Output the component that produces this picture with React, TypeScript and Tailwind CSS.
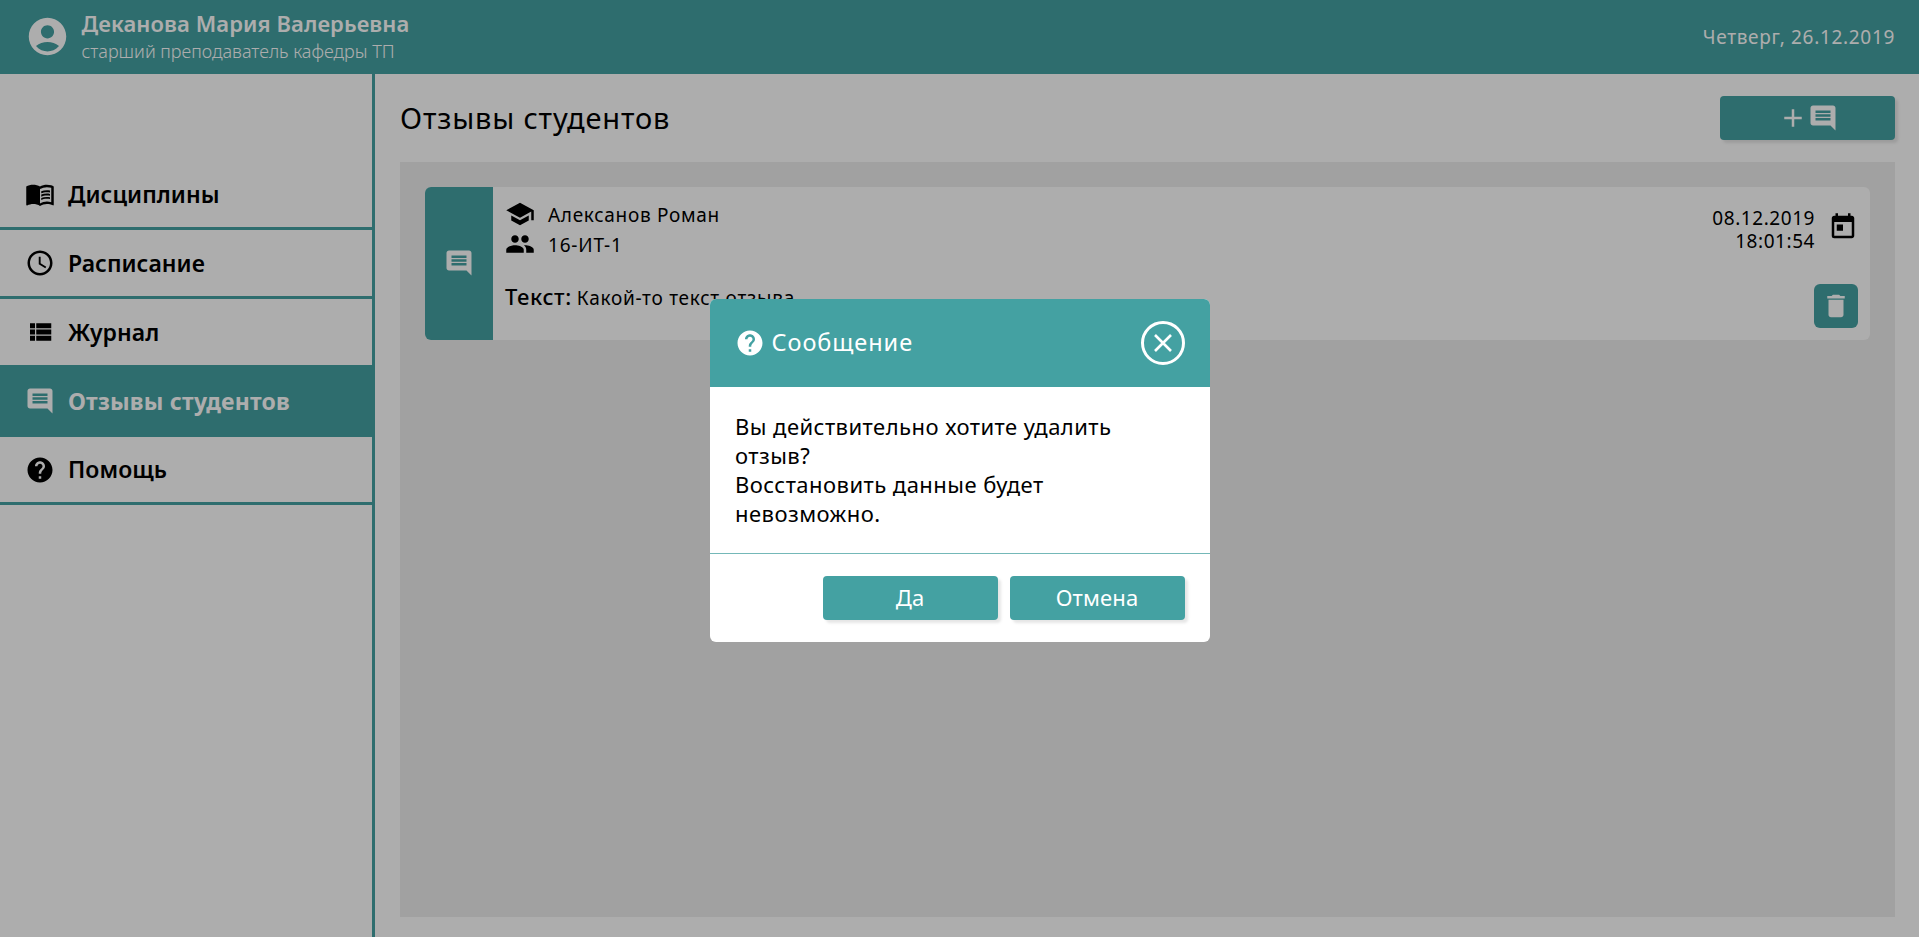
import type { ReactNode } from "react";
import {
  MdAccessTime,
  MdAccountCircle,
  MdAdd,
  MdComment,
  MdDelete,
  MdHelp,
  MdMenuBook,
  MdPeople,
  MdSchool,
  MdToday,
} from "react-icons/md";

function ListIcon() {
  return (
    <svg width="30" height="30" viewBox="0 0 24 24" fill="currentColor">
      <path d="M4 14h4v-4H4v4zm0 5h4v-4H4v4zM4 9h4V5H4v4zm5 5h12v-4H9v4zm0 5h12v-4H9v4zM9 5v4h12V5H9z" />
    </svg>
  );
}

function NavItem({ icon, label, active = false }: { icon: ReactNode; label: string; active?: boolean }) {
  return (
    <a
      className={
        active
          ? "flex h-[69px] items-center gap-[13px] border-b-3 border-[#44a1a2] bg-[#44a1a2] pl-[25px] text-[23px] font-bold tracking-[0.22px] text-white"
          : "flex h-[69px] items-center gap-[13px] border-b-3 border-[#44a1a2] pl-[25px] text-[23px] font-semibold tracking-[0.05px] last:h-[68px]"
      }
    >
      {icon}
      <span>{label}</span>
    </a>
  );
}

function Header() {
  return (
    <header className="flex h-[74px] shrink-0 items-center justify-between bg-[#44a1a2] pr-6 pl-[24.5px] text-white">
      <div className="flex items-center gap-3">
        <MdAccountCircle size={45} className="-mt-[2px]" />
        <div>
          <div className="text-[22px] leading-[27px] font-semibold tracking-[0.1px]">Деканова Мария Валерьевна</div>
          <div className="pt-px text-[18px] leading-[26px] font-light">старший преподаватель кафедры ТП</div>
        </div>
      </div>
      <div className="text-[19px] tracking-[0.68px]">Четверг, 26.12.2019</div>
    </header>
  );
}

function Sidebar() {
  return (
    <nav className="w-[375px] shrink-0 border-r-3 border-[#44a1a2] pt-[87px]">
      <NavItem icon={<MdMenuBook size={30} />} label="Дисциплины" />
      <NavItem icon={<MdAccessTime size={30} />} label="Расписание" />
      <NavItem icon={<ListIcon />} label="Журнал" />
      <NavItem icon={<MdComment size={30} />} label="Отзывы студентов" active />
      <NavItem icon={<MdHelp size={30} />} label="Помощь" />
    </nav>
  );
}

function ReviewCard() {
  return (
    <article className="flex h-[153px] overflow-hidden rounded-md bg-white">
      <div className="flex w-[68px] shrink-0 items-center justify-center bg-[#44a1a2] text-white">
        <MdComment size={30} className="-mt-px" />
      </div>
      <div className="flex flex-1 justify-between p-3">
        <div className="text-[19px]">
          <div className="flex h-[30px] items-center gap-[13px] tracking-[0.7px]">
            <MdSchool size={30} />
            <span className="pt-[2px]">Алексанов Роман</span>
          </div>
          <div className="flex h-[30px] items-center gap-[13px] tracking-[0.8px]">
            <MdPeople size={30} />
            <span className="pt-[2px]">16-ИТ-1</span>
          </div>
          <p className="mt-[22px] flex items-baseline gap-[5px] leading-[30px] tracking-[0.75px]">
            <b className="text-[22px] font-medium tracking-[0.6px]">Текст:</b>
            <span>Какой-то текст отзыва</span>
          </p>
        </div>
        <div className="flex flex-col items-end justify-between">
          <div className="flex gap-[12.5px] pt-[8px] pr-[0.5px]">
            <div className="text-right text-[19px] leading-[23px] tracking-[0.55px]">
              <div>08.12.2019</div>
              <div>18:01:54</div>
            </div>
            <MdToday size={30} className="mt-[5px]" />
          </div>
          <button className="flex size-11 items-center justify-center rounded-md bg-[#44a1a2] text-white">
            <MdDelete size={30} />
          </button>
        </div>
      </div>
    </article>
  );
}

function ConfirmDialog() {
  return (
    <div className="w-[500px] overflow-hidden rounded-md bg-white">
      <div className="flex h-[88px] items-center justify-between bg-[#44a1a2] px-[25px] text-white">
        <div className="flex items-center gap-[7px] text-[23.5px] tracking-[0.95px]">
          <MdHelp size={30} />
          <span>Сообщение</span>
        </div>
        <button className="flex size-11 items-center justify-center rounded-full border-3 border-white">
          <svg width="18" height="18" viewBox="0 0 18 18" fill="none" stroke="currentColor" strokeWidth="2.6">
            <path d="M1 1L17 17M17 1L1 17" />
          </svg>
        </button>
      </div>
      <div className="border-b border-[#74b8b8] py-[25px] pr-[24px] pl-[25.5px] text-[22px] leading-[29px] tracking-[0.46px]">
        Вы действительно хотите удалить
        <br />
        отзыв?
        <br />
        Восстановить данные будет
        <br />
        невозможно.
      </div>
      <div className="flex justify-end gap-3 px-[25px] py-[22px] text-[22px] tracking-[0.15px] text-white">
        <button className="h-11 w-[175px] rounded bg-[#44a1a2] pb-px shadow-[3px_3px_3px_rgba(0,0,0,0.1)]">Да</button>
        <button className="h-11 w-[175px] rounded bg-[#44a1a2] pb-px shadow-[3px_3px_3px_rgba(0,0,0,0.1)]">Отмена</button>
      </div>
    </div>
  );
}

export default function App() {
  return (
    <div className="relative flex h-screen flex-col overflow-hidden bg-white font-['Noto_Sans',sans-serif] text-black">
      <Header />
      <div className="flex min-h-0 flex-1">
        <Sidebar />
        <main className="flex flex-1 flex-col pt-[22px] pr-6 pb-5 pl-[25px]">
          <div className="mb-[22px] flex h-11 items-center justify-between">
            <h1 className="text-[29px] tracking-[0.83px]">Отзывы студентов</h1>
            <button className="flex h-11 w-[175px] items-center justify-center rounded bg-[#44a1a2] text-white shadow-[3px_3px_3px_rgba(0,0,0,0.1)]">
              <MdAdd size={30} />
              <MdComment size={30} />
            </button>
          </div>
          <section className="flex-1 bg-[#ededed] p-[25px]">
            <ReviewCard />
          </section>
        </main>
      </div>
      <div className="absolute inset-0 flex items-center justify-center bg-black/32 pt-1">
        <ConfirmDialog />
      </div>
    </div>
  );
}
